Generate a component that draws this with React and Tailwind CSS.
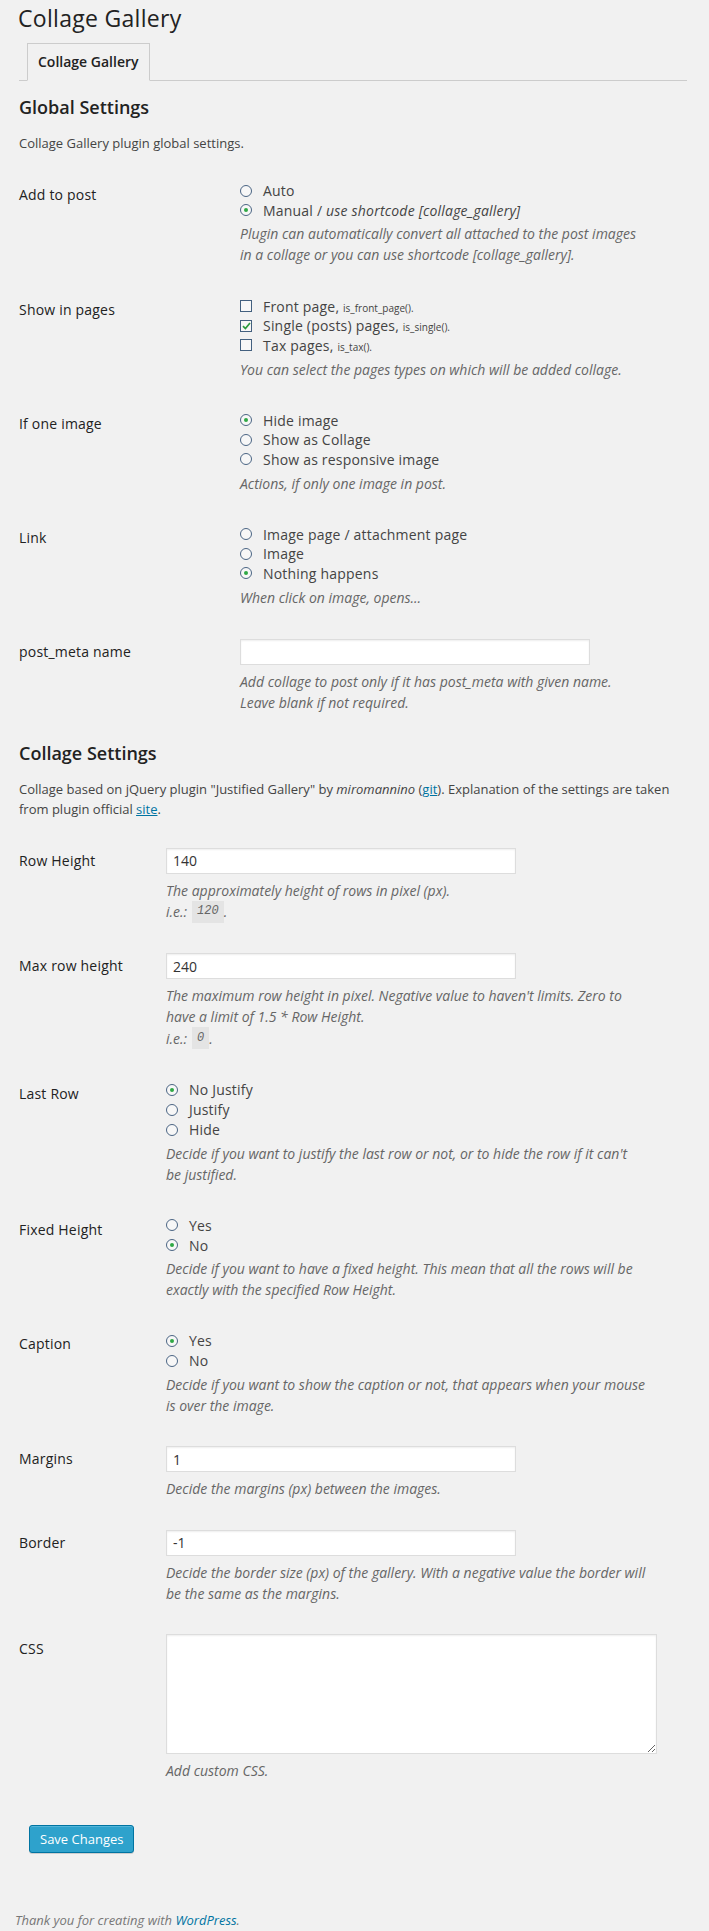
const Radio = ({ checked }) => (
  <span className="w-[12px] h-[12px] shrink-0 rounded-full border border-[#4b6584] bg-[#f7f7f7] flex items-center justify-center">
    {checked && <span className="w-[4px] h-[4px] rounded-full bg-[#2fa845]" />}
  </span>
);

const Checkbox = ({ checked }) => (
  <span className="w-[12px] h-[12px] shrink-0 border border-[#43607f] bg-[#f7f7f7] flex items-center justify-center">
    {checked && (
      <svg width="9" height="8" viewBox="0 0 9 8">
        <path d="M1 4.2 L3.4 6.5 L8 1" fill="none" stroke="#2a9a3c" strokeWidth="1.7" />
      </svg>
    )}
  </span>
);

const Option = ({ control, children, h = 'h-[19.5px]' }) => (
  <div className={`${h} flex items-center gap-[11px] text-[14px] tracking-[0.2px] text-[#444]`}>
    {control}
    <span>{children}</span>
  </div>
);

const Desc = ({ children, top = 'mt-[3px]' }) => (
  <div className={`${top} text-[14px] leading-[21px] italic text-[#666] whitespace-nowrap`}>{children}</div>
);

const Row = ({ label, labelClass, padClass = 'pt-[3px]', children }) => (
  <div className="flex">
    <div className={`${labelClass} ${padClass} shrink-0 text-[14px] tracking-[0.2px] leading-[20px] text-[#222]`}>{label}</div>
    <div className="flex flex-col">{children}</div>
  </div>
);

const TextInput = ({ value = '' }) => (
  <input
    readOnly
    defaultValue={value}
    className="h-[26px] w-[350px] border border-[#ddd] bg-white px-[6px] text-[14px] text-[#333] shadow-[inset_0_1px_2px_rgba(0,0,0,0.07)] outline-none"
  />
);

const Example = ({ children }) => (
  <div className="flex h-[22px] items-center">
    <span>i.e.:</span>
    <code className="ml-[5px] flex h-[22px] items-center bg-[#e4e4e4] px-[5px] font-['Liberation_Mono',monospace] text-[12px] italic">
      {children}
    </code>
    <span>.</span>
  </div>
);

const Small = ({ children }) => <span className="text-[10px] tracking-normal">{children}</span>;

const A = 'w-[221px]';
const B = 'w-[147px]';
const H = 'h-[20px]';

export default function App() {
  return (
    <div className="min-h-[1931px] bg-[#f1f1f1] text-[#222] font-['Open_Sans',sans-serif]">
      <div className="pl-[19px] pr-[22px] pt-[4px]">
        <h2 className="-ml-[1px] text-[23px] leading-[29px] tracking-[0.3px] text-[#222]">Collage Gallery</h2>

        <div className="mt-[10px] flex border-b border-[#ccc] pl-[8px]">
          <div className="-mb-px border border-[#ccc] border-b-[#f1f1f1] bg-[#f1f1f1] px-[10px] py-[6px] text-[14px] font-semibold leading-[24px] text-[#222]">
            Collage Gallery
          </div>
        </div>

        <h3 className="mt-[14px] text-[18px] font-semibold leading-[24px]">Global Settings</h3>
        <p className="mt-[14px] text-[13px] leading-[20px] text-[#444]">Collage Gallery plugin global settings.</p>

        <div className="mt-[28px] flex flex-col gap-[30.5px]">
          <Row label="Add to post" labelClass={A} padClass="pt-[4px]">
            <Option control={<Radio />}>Auto</Option>
            <Option control={<Radio checked />}>
              Manual / <i>use shortcode [collage_gallery]</i>
            </Option>
            <Desc>
              Plugin can automatically convert all attached to the post images
              <br />
              in a collage or you can use shortcode [collage_gallery].
            </Desc>
          </Row>

          <Row label="Show in pages" labelClass={A} padClass="pt-[4px]">
            <div className="pt-[1px]">
              <Option control={<Checkbox />}>
                Front page, <Small>is_front_page().</Small>
              </Option>
              <Option control={<Checkbox checked />}>
                Single (posts) pages, <Small>is_single().</Small>
              </Option>
              <Option control={<Checkbox />}>
                Tax pages, <Small>is_tax().</Small>
              </Option>
            </div>
            <Desc top="mt-[4px]">You can select the pages types on which will be added collage.</Desc>
          </Row>

          <Row label="If one image" labelClass={A}>
            <Option control={<Radio checked />}>Hide image</Option>
            <Option control={<Radio />}>Show as Collage</Option>
            <Option control={<Radio />}>Show as responsive image</Option>
            <Desc top="mt-[4px]">Actions, if only one image in post.</Desc>
          </Row>

          <Row label="Link" labelClass={A}>
            <Option control={<Radio />}>Image page / attachment page</Option>
            <Option control={<Radio />}>Image</Option>
            <Option control={<Radio checked />}>Nothing happens</Option>
            <Desc top="mt-[4px]">When click on image, opens...</Desc>
          </Row>

          <Row label="post_meta name" labelClass={A}>
            <TextInput />
            <Desc top="mt-[6px]">
              Add collage to post only if it has post_meta with given name.
              <br />
              Leave blank if not required.
            </Desc>
          </Row>
        </div>

        <h3 className="mt-[28px] text-[18px] font-semibold leading-[24px]">Collage Settings</h3>
        <p className="mt-[14px] text-[13px] leading-[20px] text-[#444]">
          Collage based on jQuery plugin "Justified Gallery" by <i>miromannino</i> (
          <a className="text-[#0074a2] underline">git</a>). Explanation of the settings are taken
          <br />
          from plugin official <a className="text-[#0074a2] underline">site</a>.
        </p>

        <div className="mt-[29px] flex flex-col gap-[30.5px]">
          <Row label="Row Height" labelClass={B}>
            <TextInput value="140" />
            <Desc top="mt-[6px]">
              The approximately height of rows in pixel (px).
              <Example>120</Example>
            </Desc>
          </Row>

          <Row label="Max row height" labelClass={B}>
            <TextInput value="240" />
            <Desc top="mt-[6px]">
              The maximum row height in pixel. Negative value to haven't limits. Zero to
              <br />
              have a limit of 1.5 * Row Height.
              <Example>0</Example>
            </Desc>
          </Row>

          <Row label="Last Row" labelClass={B} padClass="pt-[4px]">
            <Option h={H} control={<Radio checked />}>No Justify</Option>
            <Option h={H} control={<Radio />}>Justify</Option>
            <Option h={H} control={<Radio />}>Hide</Option>
            <Desc>
              Decide if you want to justify the last row or not, or to hide the row if it can't
              <br />
              be justified.
            </Desc>
          </Row>

          <Row label="Fixed Height" labelClass={B} padClass="pt-[5px]">
            <Option h={H} control={<Radio />}>Yes</Option>
            <Option h={H} control={<Radio checked />}>No</Option>
            <Desc>
              Decide if you want to have a fixed height. This mean that all the rows will be
              <br />
              exactly with the specified Row Height.
            </Desc>
          </Row>

          <Row label="Caption" labelClass={B}>
            <Option h={H} control={<Radio checked />}>Yes</Option>
            <Option h={H} control={<Radio />}>No</Option>
            <Desc>
              Decide if you want to show the caption or not, that appears when your mouse
              <br />
              is over the image.
            </Desc>
          </Row>

          <Row label="Margins" labelClass={B}>
            <TextInput value="1" />
            <Desc top="mt-[6px]">Decide the margins (px) between the images.</Desc>
          </Row>

          <Row label="Border" labelClass={B}>
            <TextInput value="-1" />
            <Desc top="mt-[6px]">
              Decide the border size (px) of the gallery. With a negative value the border will
              <br />
              be the same as the margins.
            </Desc>
          </Row>

          <Row label="CSS" labelClass={B} padClass="pt-[5px]">
            <textarea
              readOnly
              className="block h-[120px] w-[491px] resize-y border border-[#ddd] bg-white shadow-[inset_0_1px_2px_rgba(0,0,0,0.07)] outline-none"
            />
            <Desc top="mt-[6px]">Add custom CSS.</Desc>
          </Row>
        </div>

        <div className="mt-[44px] pl-[10px]">
          <button className="h-[28px] rounded-[3px] border border-[#0074a2] bg-[#2ea2cc] px-[10px] text-[13px] leading-[26px] text-white shadow-[inset_0_1px_0_rgba(120,200,230,0.5),0_1px_0_rgba(0,0,0,0.15)]">
            Save Changes
          </button>
        </div>
      </div>

      <div className="mt-[57px] pl-[15px] text-[13px] leading-[20px] italic text-[#777]">
        Thank you for creating with <a className="text-[#0074a2]">WordPress</a>.
      </div>
    </div>
  );
}
